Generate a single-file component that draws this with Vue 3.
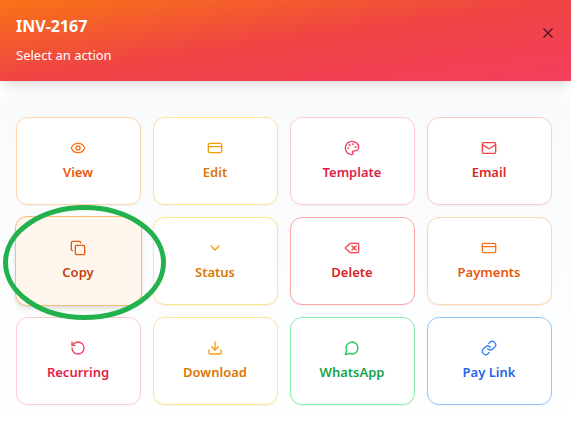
<template>
  <main class="sheet">
    <header class="sheet__header">
      <div class="sheet__heading">
        <h1 class="sheet__title">INV-2167</h1>
        <p class="sheet__subtitle">Select an action</p>
      </div>
      <button type="button" class="sheet__close" aria-label="Close">
        <svg viewBox="0 0 10 10" width="10" height="10">
          <path d="M0.5 0.5 9.5 9.5M9.5 0.5 0.5 9.5" />
        </svg>
      </button>
    </header>

    <section class="sheet__body">
      <ul class="actions">
        <li v-for="action in actions" :key="action.label" class="actions__item">
          <button
            type="button"
            class="action"
            :class="[`action--${action.color}`, { 'action--active': action.active }]"
          >
            <svg class="action__icon" viewBox="0 0 24 24" aria-hidden="true">
              <path v-for="d in action.paths" :key="d" :d="d" />
            </svg>
            <span>{{ action.label }}</span>
          </button>
          <svg v-if="action.active" class="marker" viewBox="0 0 163 115" aria-hidden="true">
            <ellipse cx="81.5" cy="57.5" rx="79" ry="55" />
          </svg>
        </li>
      </ul>
    </section>
  </main>
</template>

<script setup>
const card = ['M4 5h16a2 2 0 0 1 2 2v10a2 2 0 0 1-2 2H4a2 2 0 0 1-2-2V7a2 2 0 0 1 2-2z', 'M2 10h20'];

const actions = [
  {
    label: 'View',
    color: 'orange',
    paths: [
      'M2.06 12.35a1 1 0 0 1 0-.7 10.75 10.75 0 0 1 19.88 0 1 1 0 0 1 0 .7 10.75 10.75 0 0 1-19.88 0',
      'M12 9a3 3 0 1 0 0 6 3 3 0 0 0 0-6z',
    ],
  },
  { label: 'Edit', color: 'amber', paths: card },
  {
    label: 'Template',
    color: 'rose',
    paths: [
      'M12 2C6.5 2 2 6.5 2 12s4.5 10 10 10c.93 0 1.65-.75 1.65-1.69 0-.44-.18-.83-.44-1.12-.29-.29-.44-.65-.44-1.13a1.64 1.64 0 0 1 1.67-1.67h2c3.05 0 5.55-2.5 5.55-5.55C21.97 6.01 17.46 2 12 2z',
      'M13.5 6a.5.5 0 1 0 0 1 .5.5 0 0 0 0-1z',
      'M17.5 10a.5.5 0 1 0 0 1 .5.5 0 0 0 0-1z',
      'M8.5 7a.5.5 0 1 0 0 1 .5.5 0 0 0 0-1z',
      'M6.5 12a.5.5 0 1 0 0 1 .5.5 0 0 0 0-1z',
    ],
  },
  {
    label: 'Email',
    color: 'red',
    paths: [
      'M4 4h16a2 2 0 0 1 2 2v12a2 2 0 0 1-2 2H4a2 2 0 0 1-2-2V6a2 2 0 0 1 2-2z',
      'm22 7-8.97 5.7a1.94 1.94 0 0 1-2.06 0L2 7',
    ],
  },
  {
    label: 'Copy',
    color: 'orange',
    active: true,
    paths: [
      'M10 8h10a2 2 0 0 1 2 2v10a2 2 0 0 1-2 2H10a2 2 0 0 1-2-2V10a2 2 0 0 1 2-2z',
      'M4 16c-1.1 0-2-.9-2-2V4c0-1.1.9-2 2-2h10c1.1 0 2 .9 2 2',
    ],
  },
  { label: 'Status', color: 'amber', paths: ['m6 9 6 6 6-6'] },
  {
    label: 'Delete',
    color: 'danger',
    paths: [
      'M10 5a2 2 0 0 0-1.34.52l-6.33 5.74a1 1 0 0 0 0 1.48l6.33 5.74A2 2 0 0 0 10 19h10a2 2 0 0 0 2-2V7a2 2 0 0 0-2-2z',
      'm12 9 6 6',
      'm18 9-6 6',
    ],
  },
  { label: 'Payments', color: 'orange', paths: card },
  {
    label: 'Recurring',
    color: 'rose',
    paths: ['M3 12a9 9 0 1 0 9-9 9.75 9.75 0 0 0-6.74 2.74L3 8', 'M3 3v5h5'],
  },
  {
    label: 'Download',
    color: 'amber',
    paths: ['M12 15V3', 'M21 15v4a2 2 0 0 1-2 2H5a2 2 0 0 1-2-2v-4', 'm7 10 5 5 5-5'],
  },
  { label: 'WhatsApp', color: 'green', paths: ['M7.9 20A9 9 0 1 0 4 16.1L2 22Z'] },
  {
    label: 'Pay Link',
    color: 'blue',
    paths: [
      'M10 13a5 5 0 0 0 7.54.54l3-3a5 5 0 0 0-7.07-7.07l-1.72 1.71',
      'M14 11a5 5 0 0 0-7.54-.54l-3 3a5 5 0 0 0 7.07 7.07l1.71-1.71',
    ],
  },
];
</script>

<style>
body {
  margin: 0;
  background-color: #fff;
}
</style>

<style scoped>
.sheet {
  font-family: 'Segoe UI', 'Noto Sans', 'Open Sans', sans-serif;
}

.sheet__header {
  display: flex;
  align-items: flex-start;
  justify-content: space-between;
  padding: 12px 16px 16px;
  margin-bottom: 16px;
  color: #fff;
  background-image: linear-gradient(to bottom right, #f97316, #ef4444, #f43f5e);
  box-shadow: 0 10px 15px -3px rgba(0, 0, 0, 0.1), 0 4px 6px -4px rgba(0, 0, 0, 0.1);
}

.sheet__heading {
  display: flex;
  flex-direction: column;
  gap: 5px;
}

.sheet__title {
  margin: 0;
  font-size: 16px;
  font-weight: 700;
  line-height: 28px;
}

.sheet__subtitle {
  margin: 0;
  font-size: 13px;
  line-height: 20px;
  color: #fff;
}

.sheet__close {
  display: flex;
  padding: 2px;
  margin-top: 14px;
  border: 0;
  background: none;
  cursor: pointer;
}

.sheet__close svg {
  fill: none;
  stroke: #4a1424;
  stroke-width: 1.2;
}

.sheet__body {
  position: relative;
  padding: 20px 19px 16px 16px;
  background-image: linear-gradient(to bottom, #f8fafc, #fff);
}

.actions {
  display: grid;
  grid-template-columns: repeat(4, 1fr);
  gap: 12px;
  padding: 0;
  margin: 0;
  list-style: none;
}

.actions__item {
  position: relative;
  display: flex;
  height: 88px;
}

.action {
  display: flex;
  flex: 1;
  flex-direction: column;
  align-items: center;
  justify-content: center;
  gap: 6px;
  padding: 0 1px 0 0;
  border: 1px solid;
  border-radius: 12px;
  background-color: #fff;
  box-shadow: 0 1px 2px rgba(0, 0, 0, 0.05);
  font-family: inherit;
  font-size: 13px;
  font-weight: 600;
  line-height: 20px;
  cursor: pointer;
}

.action__icon {
  width: 16px;
  height: 16px;
  fill: none;
  stroke: currentColor;
  stroke-width: 2;
  stroke-linecap: round;
  stroke-linejoin: round;
}

.action--orange {
  color: #ea580c;
  border-color: #fed7aa;
}
.action--orange .action__icon {
  color: #f97316;
}

.action--amber {
  color: #d97706;
  border-color: #fde68a;
}
.action--amber .action__icon {
  color: #f59e0b;
}

.action--rose {
  color: #e11d48;
  border-color: #fecdd3;
}
.action--rose .action__icon {
  color: #f43f5e;
}

.action--red,
.action--danger {
  color: #dc2626;
  border-color: #fecaca;
}
.action--danger {
  border-color: #fca5a5;
}
.action--red .action__icon,
.action--danger .action__icon {
  color: #ef4444;
}

.action--green {
  color: #16a34a;
  border-color: #86efac;
}
.action--green .action__icon {
  color: #22c55e;
}

.action--blue {
  color: #2563eb;
  border-color: #93c5fd;
}
.action--blue .action__icon {
  color: #3b82f6;
}

.action--active {
  margin: -1px;
  color: #c2410c;
  border-color: #fdba74;
  background-color: #fff7ed;
  box-shadow: 0 4px 6px -1px rgba(0, 0, 0, 0.1), 0 2px 4px -2px rgba(0, 0, 0, 0.1);
}
.action--active .action__icon {
  color: #ea580c;
}

/* hand-drawn highlight around the active action */
.marker {
  position: absolute;
  top: -12px;
  left: -13px;
  z-index: 1;
  width: 163px;
  height: 115px;
  fill: none;
  stroke: #22b14c;
  stroke-width: 5;
  pointer-events: none;
}
</style>
